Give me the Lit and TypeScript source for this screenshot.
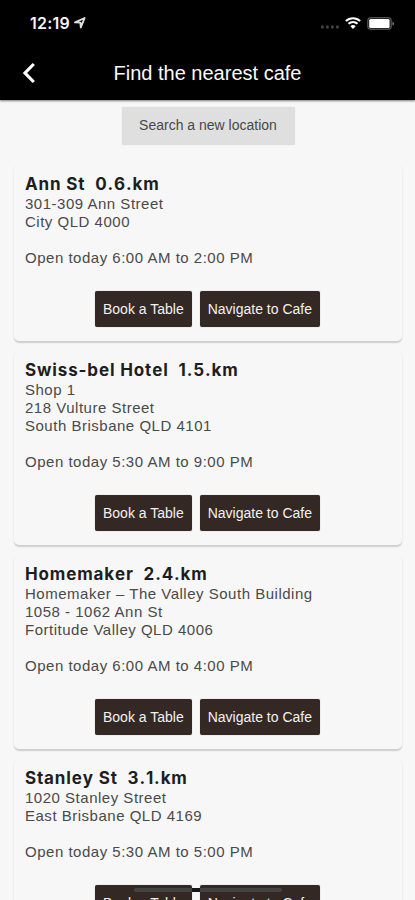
import { LitElement, html, css } from "lit";
import { customElement, property } from "lit/decorators.js";

interface Cafe {
  name: string;
  distance: string;
  address: string[];
  hours: string;
}

const CAFES: Cafe[] = [
  { name: "Ann St", distance: "0.6.km", address: ["301-309 Ann Street", "City QLD 4000"], hours: "6:00 AM to 2:00 PM" },
  { name: "Swiss-bel Hotel", distance: "1.5.km", address: ["Shop 1", "218 Vulture Street", "South Brisbane QLD 4101"], hours: "5:30 AM to 9:00 PM" },
  { name: "Homemaker", distance: "2.4.km", address: ["Homemaker – The Valley South Building", "1058 - 1062 Ann St", "Fortitude Valley QLD 4006"], hours: "6:00 AM to 4:00 PM" },
  { name: "Stanley St", distance: "3.1.km", address: ["1020 Stanley Street", "East Brisbane QLD 4169"], hours: "5:30 AM to 5:00 PM" },
];

@customElement("status-bar")
class StatusBar extends LitElement {
  static styles = css`
    :host {
      display: flex;
      justify-content: space-between;
      height: 46px;
      padding: 0 20px 0 30px;
      box-sizing: border-box;
      align-items: center;
      color: #f4f4f4;
    }
    .left, .right { display: flex; align-items: center; }
    .time { font: 600 16px/20px Inter, "Liberation Sans", sans-serif; letter-spacing: 0.2px; }
    .arrow { margin-left: 4px; }
    .dots { margin: 8px 5px 0 0; }
    .wifi { margin-right: 6px; }
    svg { display: block; }
  `;
  render() {
    return html`
      <div class="left">
        <span class="time">12:19</span>
        <svg class="arrow" width="12" height="12" viewBox="0 0 12 12">
          <path d="M1 5.4 10.6 1 6.8 10.4 6.4 5.6Z" fill="none" stroke="#dedede" stroke-width="1.9" stroke-linejoin="round" />
        </svg>
      </div>
      <div class="right">
        <svg class="dots" width="20" height="4" viewBox="0 0 20 4" fill="#444">
          <rect x="1" y="0.5" width="2.8" height="3" rx="1" /><rect x="6" y="0.5" width="2.8" height="3" rx="1" />
          <rect x="11" y="0.5" width="2.8" height="3" rx="1" /><rect x="16" y="0.5" width="2.8" height="3" rx="1" />
        </svg>
        <svg class="wifi" width="16" height="12" viewBox="0 0 16 12">
          <path d="M0.9 4.1a10.2 10.2 0 0 1 14.2 0M3.5 6.8a6.5 6.5 0 0 1 9 0" fill="none" stroke="#fff" stroke-width="2.1" />
          <path d="M8 12 5.3 9.2a3.9 3.9 0 0 1 5.4 0Z" fill="#fff" />
        </svg>
        <svg width="28" height="13" viewBox="0 0 28 13">
          <rect x="0.8" y="0.8" width="23.4" height="11.4" rx="3.2" fill="none" stroke="#4c4c4c" stroke-width="1.5" />
          <rect x="2.2" y="2" width="20.4" height="9" rx="1.5" fill="#fff" />
          <path d="M25.5 4.4v4.2q1.7-.7 1.7-2.1t-1.7-2.1Z" fill="#777" />
        </svg>
      </div>
    `;
  }
}

@customElement("cafe-card")
class CafeCard extends LitElement {
  @property({ attribute: false }) cafe!: Cafe;
  static styles = css`
    :host {
      display: block;
      box-sizing: border-box;
      margin: 0 13px 0 14px;
      padding: 9px 10px 14px 11px;
      border-radius: 5px;
      background: #f7f7f7;
      box-shadow: 0 1.5px 1.5px rgba(0, 0, 0, 0.17);
      color: #4a4a4a;
    }
    .title {
      margin: 0 0 1px;
      font: 700 17px/20px Inter, "Liberation Sans", sans-serif;
      font-kerning: none;
      letter-spacing: 0.86px;
      color: #1e1e1e;
      white-space: pre;
    }
    .line { font-size: 15px; line-height: 18px; letter-spacing: 0.51px; white-space: nowrap; }
    .hours { margin-top: 18px; }
    .actions { display: flex; justify-content: center; gap: 8px; margin: 24px 2px 0 0; }
    button {
      height: 36px;
      padding: 0 8px;
      border: 0;
      border-radius: 2px;
      background: #342825;
      color: #f3f1f0;
      font: 14px "Liberation Sans", Arial, sans-serif;
      box-shadow: 0 0 1px rgba(0, 0, 0, 0.35);
    }
  `;
  render() {
    const { name, distance, address, hours } = this.cafe;
    return html`
      <h2 class="title">${name}${"  "}${distance}</h2>
      ${address.map((line) => html`<div class="line">${line}</div>`)}
      <div class="line hours">Open today ${hours}</div>
      <div class="actions"><button>Book a Table</button><button>Navigate to Cafe</button></div>
    `;
  }
}

@customElement("app-root")
class AppRoot extends LitElement {
  static styles = css`
    :host {
      display: flex;
      flex-direction: column;
      position: relative;
      width: 415px;
      height: 900px;
      overflow: hidden;
      background: #f7f7f7;
      font-family: "Liberation Sans", Arial, sans-serif;
    }
    header { flex: none; height: 100px; background: #000; box-shadow: 0 1px 2px rgba(0, 0, 0, 0.5); z-index: 1; }
    .bar { display: grid; grid-template-columns: 60px 1fr 60px; height: 54px; align-items: center; }
    .back { display: block; margin-left: 22px; }
    h1 { margin: 0; font-size: 20px; font-weight: 400; color: #fafafa; text-align: center; white-space: nowrap; }
    .search {
      flex: none;
      align-self: center;
      width: 173px;
      height: 38px;
      margin: 7px 0 20px 2px;
      border: 0;
      border-radius: 2px;
      background: #dfdfdf;
      color: #484848;
      font: 14px "Liberation Sans", Arial, sans-serif;
      padding: 0 1px 2px 0;
      box-shadow: 0 0 1px rgba(0, 0, 0, 0.18);
    }
    main { display: flex; flex-direction: column; gap: 10px; }
    .home { position: absolute; left: 134px; bottom: 8px; width: 148px; height: 4px; border-radius: 2px; background: linear-gradient(90deg, #444 0 58px, #171717 58px 66px, #444 66px); }
  `;
  render() {
    return html`
      <header>
        <status-bar></status-bar>
        <div class="bar">
          <svg class="back" width="14" height="22" viewBox="0 0 14 22">
            <path d="M11.8 2 3 11l8.8 9" fill="none" stroke="#fff" stroke-width="3.2" />
          </svg>
          <h1>Find the nearest cafe</h1>
        </div>
      </header>
      <button class="search">Search a new location</button>
      <main>${CAFES.map((cafe) => html`<cafe-card .cafe=${cafe}></cafe-card>`)}</main>
      <div class="home"></div>
    `;
  }
}
